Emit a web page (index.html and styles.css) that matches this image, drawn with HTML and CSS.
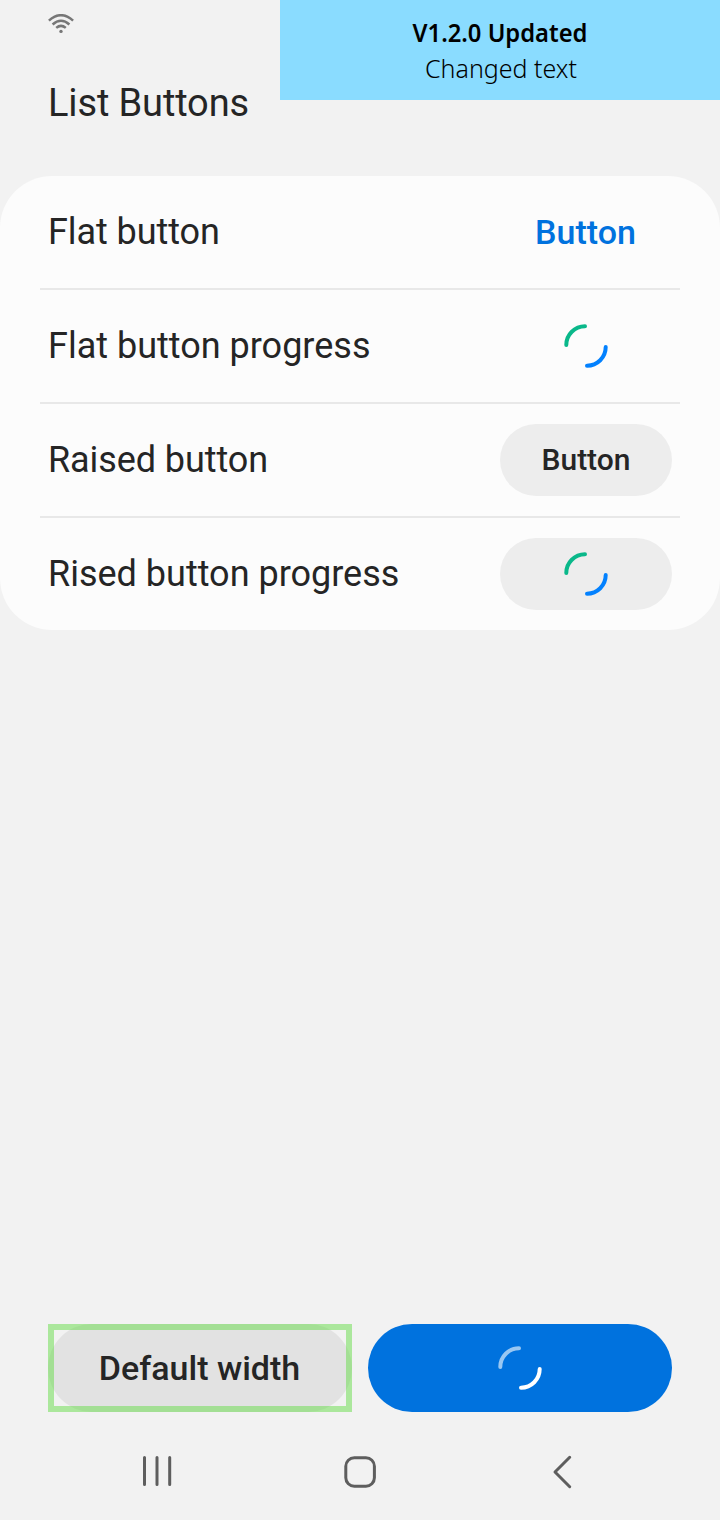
FILE: index.html
```html
<!DOCTYPE html>
<html lang="en">
<head>
<meta charset="utf-8">
<title>List Buttons</title>
<link rel="stylesheet" href="styles.css">
</head>
<body>
<svg class="defs" aria-hidden="true">
  <symbol id="spinner" viewBox="0 0 44 44">
    <path class="arc-a" d="M2.3 21A18.7 18.7 0 0 1 21 2.3"/>
    <path class="arc-b" d="M41.7 23A18.7 18.7 0 0 1 23 41.7"/>
  </symbol>
</svg>
<div class="screen">
  <header class="header">
    <svg class="wifi" viewBox="0 0 26 20">
      <path d="M.9 6.6Q13-4.2 25.1 6.6M4.6 10.5Q13 2.9 21.4 10.5M8.2 13.9Q13 9.9 17.8 13.9"/>
      <circle cx="13" cy="17.4" r="1.7"/>
    </svg>
    <h1 class="title">List Buttons</h1>
    <aside class="banner">
      <strong class="banner-version">V1.2.0 Updated</strong>
      <span class="banner-text">Changed text</span>
    </aside>
  </header>
  <main class="card">
    <div class="row"><span class="label short">Flat button</span><button class="action flat">Button</button></div>
    <div class="row"><span class="label">Flat button progress</span><button class="action"><svg class="spinner"><use href="#spinner"/></svg></button></div>
    <div class="row"><span class="label short">Raised button</span><button class="action raised text">Button</button></div>
    <div class="row"><span class="label">Rised button progress</span><button class="action raised"><svg class="spinner"><use href="#spinner"/></svg></button></div>
  </main>
  <footer class="bottom">
    <button class="wide default">Default width</button>
    <button class="wide primary"><svg class="spinner light"><use href="#spinner"/></svg></button>
  </footer>
  <nav class="nav">
    <svg viewBox="0 0 60 60"><path d="M14.5 17.5v27M27 17.5v27M39.7 17.5v27"/></svg>
    <svg viewBox="0 0 60 60"><rect x="15.8" y="17.8" width="28.6" height="28.4" rx="8.5"/></svg>
    <svg viewBox="0 0 60 60"><path d="M39.7 17.3L25 32l14.7 14.7"/></svg>
  </nav>
</div>
</body>
</html>
```
FILE: styles.css
```css
* { box-sizing: border-box; }
body { margin: 0; background: #f2f2f2; color: #252525; font-family: Roboto, sans-serif; }
.defs { display: none; }
.screen { width: 720px; height: 1520px; display: flex; flex-direction: column; }
.header { height: 176px; position: relative; padding: 14px 48px 0; }
.wifi { display: block; width: 26px; height: 20px; fill: #777; }
.wifi path { fill: none; stroke: #777; stroke-width: 2.5; }
.title { margin: 46px 0 0; font-size: 38px; font-weight: 400; line-height: 46px; letter-spacing: -.13px; }
.banner { position: absolute; top: 0; right: 0; width: 440px; height: 100px; padding-top: 14px; background: #8adcff; color: #000; display: flex; flex-direction: column; align-items: center; font-family: "Noto Sans", sans-serif; font-size: 25px; line-height: 36px; }
.banner-version { font-weight: 600; transform: scaleX(.95); white-space: nowrap; }
.banner-text { padding-left: 2px; font-weight: 300; white-space: nowrap; }
.card { height: 454px; background: #fcfcfc; border-radius: 52px; padding: 0 40px; }
.row { height: 114px; padding: 0 8px; display: flex; align-items: center; justify-content: space-between; border-bottom: 2px solid #e8e8e8; }
.row:last-child { height: 112px; border: 0; }
.label { font-size: 36px; line-height: 44px; }
.short { letter-spacing: -.08px; }
button { border: 0; padding: 0; margin: 0; background: transparent; font-family: inherit; font-weight: 500; color: #252525; display: flex; align-items: center; justify-content: center; }
.action { width: 172px; height: 72px; border-radius: 36px; font-size: 30px; }
.flat { padding-right: 1px; color: #0072de; font-size: 34px; }
.raised { background: #ededed; }
.text { padding-bottom: 2px; }
.spinner { width: 44px; height: 44px; fill: none; stroke-width: 4; stroke-linecap: round; --a: #0ab88a; --b: #0381fe; }
.light { --a: #99c7f2; --b: #fff; }
.arc-a { stroke: var(--a); }
.arc-b { stroke: var(--b); }
.bottom { margin-top: auto; padding: 0 48px; display: grid; grid-template-columns: 1fr 1fr; gap: 16px; }
.wide { position: relative; height: 88px; border-radius: 44px; font-size: 34px; }
.default { padding-right: 1px; background: #e2e2e2; }
.default::after { content: ""; position: absolute; inset: 0; border: 6px solid rgba(100, 220, 70, .5); }
.primary { background: #0072de; }
.nav { height: 108px; padding: 28px 130px 0; display: flex; justify-content: space-between; }
.nav svg { width: 60px; height: 60px; fill: none; stroke: #5e5e5e; stroke-width: 3; stroke-linecap: round; stroke-linejoin: round; }
```
